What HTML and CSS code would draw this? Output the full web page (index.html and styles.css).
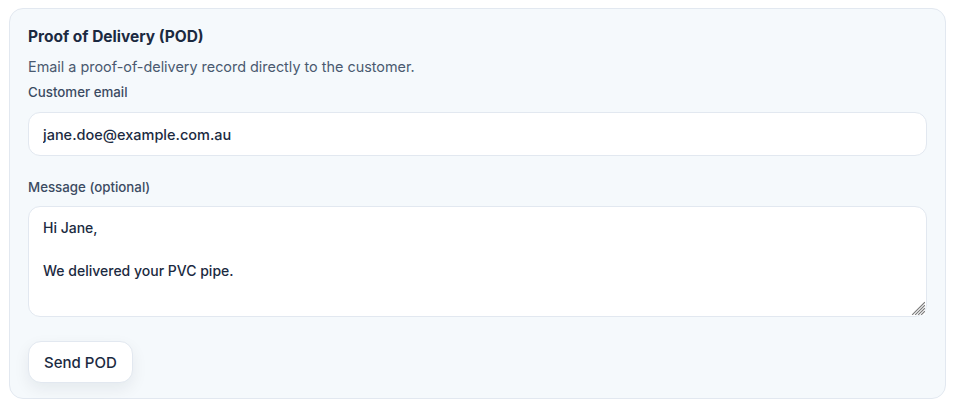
FILE: index.html
```html
<!DOCTYPE html>
<html lang="en">
<head>
<meta charset="utf-8">
<title>Proof of Delivery</title>
<link rel="stylesheet" href="styles.css">
</head>
<body>
<section class="card">
  <h2 class="title">Proof of Delivery (POD)</h2>
  <p class="desc">Email a proof-of-delivery record directly to the customer.</p>
  <label class="label" for="email">Customer email</label>
  <input class="field" id="email" type="email" value="jane.doe@example.com.au">
  <label class="label label-msg" for="msg">Message (optional)</label>
  <div class="area-wrap">
    <textarea class="field area" id="msg">Hi Jane,

We delivered your PVC pipe.</textarea>
    <svg class="grip" width="14" height="14" viewBox="0 0 14 14" aria-hidden="true">
      <rect x="0" y="0" width="14" height="14" fill="#ffffff"/>
      <g stroke="#7a7a7a" stroke-width="1.1" stroke-linecap="square">
        <line x1="13.5" y1="1.5" x2="1.5" y2="13.5"/>
        <line x1="13.5" y1="4.5" x2="4.5" y2="13.5"/>
        <line x1="13.5" y1="7.5" x2="7.5" y2="13.5"/>
        <line x1="13.5" y1="10.5" x2="10.5" y2="13.5"/>
      </g>
    </svg>
  </div>
  <div class="actions">
    <button class="btn" type="button">Send POD</button>
  </div>
</section>
</body>
</html>
```
FILE: styles.css
```css
* { box-sizing: border-box; }
html, body { background: #ffffff; }
body {
  margin: 0;
  padding: 8px 16px 0 9px;
  font-family: Inter, "Noto Sans", sans-serif;
  color: #1e293b;
}
.card {
  display: flex;
  flex-direction: column;
  height: 391px;
  background: #f5f9fc;
  border: 1px solid #e2e8f0;
  border-radius: 14px;
  padding: 18px 18px 0 18px;
}
.title {
  margin: 0;
  font-size: 15.5px;
  line-height: 20px;
  font-weight: 700;
  color: #1b2a41;
}
.desc {
  margin: 10px 0 0;
  font-size: 14.4px;
  line-height: 20px;
  color: #4a5a70;
}
.label {
  display: block;
  margin-top: 6px;
  font-size: 13.3px;
  line-height: 18px;
  font-weight: 500;
  color: #3b4b62;
}
.label-msg { margin-top: 22px; }
.field {
  display: block;
  width: 100%;
  margin-top: 11px;
  height: 44px;
  padding: 0 14px;
  border: 1px solid #e2e8f0;
  border-radius: 12px;
  background: #ffffff;
  font-family: inherit;
  font-size: 14.5px;
  font-weight: 500;
  color: #1b2a41;
  outline: none;
}
.area-wrap {
  position: relative;
  margin-top: 10px;
}
.area {
  height: 111px;
  margin-top: 0;
  padding: 10px 14px;
  font-size: 14px;
  line-height: 21.5px;
  resize: none;
}
.grip {
  position: absolute;
  right: 2px;
  bottom: 2px;
  pointer-events: none;
}
.actions { margin-top: 24px; }
.btn {
  height: 42px;
  padding: 0 15px;
  border: 1px solid #e2e8f0;
  border-radius: 13px;
  background: #ffffff;
  font-family: inherit;
  font-size: 15px;
  font-weight: 500;
  color: #1b2a41;
  box-shadow: 0 6px 16px rgba(15, 23, 42, 0.07);
  cursor: pointer;
}
```
